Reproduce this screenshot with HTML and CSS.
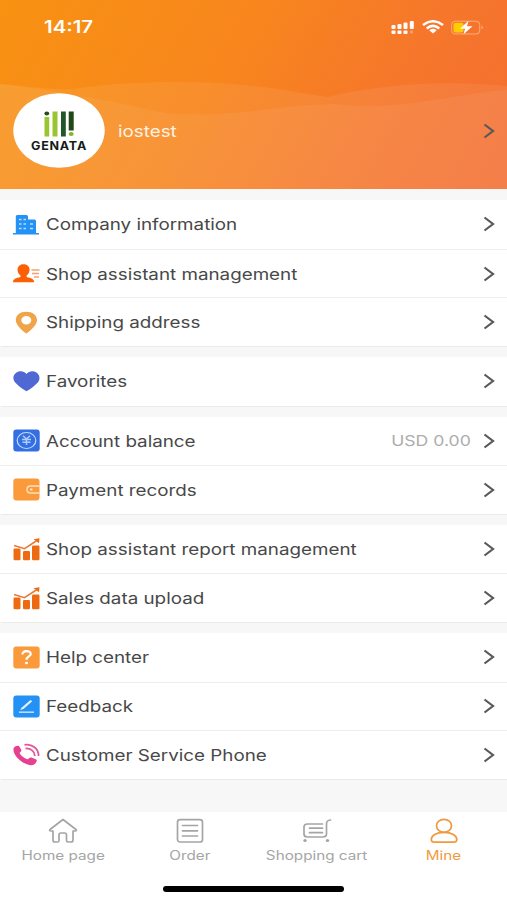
FILE: index.html
```html
<!DOCTYPE html>
<html lang="en">
<head>
<meta charset="utf-8">
<title>Mine</title>
<link rel="stylesheet" href="styles.css">
</head>
<body>
<svg class="defs" width="0" height="0">
  <symbol id="chevron" viewBox="0 0 12 16"><path d="M1.500 1.500 10 8l-8.500 6.500" fill="none" stroke="currentColor" stroke-width="2.200"/></symbol>
  <symbol id="chart" viewBox="0 0 27 23"><g fill="#ee6a12"><rect x="0.500" y="10.500" width="7" height="11.800" rx="1.200"/><rect x="10" y="13" width="7" height="9.300" rx="1.200"/><rect x="19" y="7.500" width="7.500" height="14.800" rx="1.200"/><path d="M20.500 1.300 26.500 .3l-.5 5z"/></g><path d="M1 7.500 11.500 10.700 24 2.500" fill="none" stroke="#e87936" stroke-width="1.500"/></symbol>
</svg>
<div class="screen">
  <header class="hero">
    <svg class="waves" viewBox="0 0 507 189" preserveAspectRatio="none">
      <path d="M0 84C28 86 50 90 72 89C120 82 170 81 220 83C270 86 300 93 328 97C370 86 440 79 507 86V189H0Z" fill="#fff" fill-opacity=".07"/>
      <path d="M0 84C50 89 110 101 165 113C235 119 280 104 335 104C400 112 450 94 507 90V189H0Z" fill="#fff" fill-opacity=".06"/>
    </svg>
    <div class="status">
      <span class="time"><span class="wide">14:17</span></span>
      <span class="indicators">
        <svg width="24" height="15" viewBox="0 0 24 15" fill="#fff"><rect x="0.500" y="5" width="4" height="4" rx="1"/><rect x="6.500" y="4" width="4" height="5" rx="1"/><rect x="12.500" y="2.500" width="4" height="6.500" rx="1"/><rect x="18.800" y="1" width="4" height="8" rx="1"/><rect x="0.500" y="10.500" width="4" height="3.500" rx="1"/><rect x="6.500" y="10.500" width="4" height="3.500" rx="1"/><rect x="12.500" y="10.500" width="4" height="3.500" rx="1"/><rect x="19" y="10.500" width="3" height="3" rx="1" opacity=".3"/></svg>
        <svg width="22" height="14" viewBox="0 0 22 14"><g fill="none" stroke="#fff" stroke-width="2.500"><path d="M1 5Q11-2.500 21 5"/><path d="M4.700 8.500Q11 3.200 17.300 8.500"/></g><path d="M7.300 10.200Q11 7.300 14.700 10.200L11 13.500Z" fill="#fff"/></svg>
        <svg width="33" height="15" viewBox="0 0 33 15"><rect x="0.700" y="1.200" width="28" height="12.800" rx="3.500" fill="none" stroke="#ffc49a" stroke-opacity=".7"/><path d="M30.500 5.500q3 2 0 4z" fill="#ffc49a" opacity=".7"/><rect x="2.500" y="2.800" width="10" height="9.600" rx="2" fill="#fc0"/><path d="M17.500 .8 9 8.700h5L12.500 14.200 21.500 6.300h-5.500z" fill="#fff"/></svg>
      </span>
    </div>
    <div class="profile">
      <svg class="avatar" viewBox="0 0 92 76"><ellipse cx="46" cy="37.500" rx="45.700" ry="37.300" fill="#fff"/><ellipse cx="33.800" cy="20.500" rx="2.400" ry="2" fill="#244d1c"/><rect x="31.500" y="24" width="4.700" height="19.500" fill="#9bc431"/><rect x="39.500" y="18.500" width="5" height="25" fill="#9bc431"/><rect x="48" y="18.500" width="4.800" height="25" fill="#205629"/><rect x="55.700" y="18.500" width="5" height="19" fill="#234817"/><ellipse cx="58.200" cy="41" rx="2.500" ry="2" fill="#83b52b"/><text x="18" y="56.500" class="brand" textLength="56" lengthAdjust="spacingAndGlyphs">GENATA</text></svg>
      <span class="name"><span class="wide">iostest</span></span>
      <svg class="chevron"><use href="#chevron"/></svg>
    </div>
  </header>

  <main class="menu">
    <section class="group">
      <div class="row"><svg class="icon" viewBox="0 0 27 23"><path d="M2.800 20V3.500q0-1.500 1.500-1.500h9.200q1.500 0 1.500 1.500v3h6.500q1.500 0 1.500 1.500v12h3v1.500H0V20z" fill="#2492f4"/><path d="M6 6.500h2.500m2 0H13M6 11h2.500m2 0H13M6 15.500h2.500m2 0H13M17 11h3m-3 4.500h3" stroke="#b7dcff" stroke-width="1.300"/></svg><span class="label"><span class="wide">Company information</span></span><svg class="chevron"><use href="#chevron"/></svg></div>
      <div class="row"><svg class="icon" viewBox="0 0 27 23"><path d="M10.500 2.200c-4 0-6 2.500-6 5.500 0 2.500 1.500 4.800 3 5.800v1.600C3 16.200 0 17 0 20.300h21.200c0-3.300-3-4.100-7.600-5.200v-1.600c1.500-1 3-3.300 3-5.800 0-3-2-5.500-6.100-5.500z" fill="#fb6104"/><path d="M18.500 8h8M19 11.500h7M21 15h5" stroke="#f6a16c" stroke-width="1.500"/></svg><span class="label"><span class="wide">Shop assistant management</span></span><svg class="chevron"><use href="#chevron"/></svg></div>
      <div class="row"><svg class="icon" viewBox="0 0 27 23"><path fill-rule="evenodd" d="M13.300.8C7 .8 2.800 4.300 2.800 9c0 5 5.700 10 10.500 13.600C18.300 19 24 14 24 9 24 4.300 19.600.8 13.300.8zm0 4.200a5 4.200 0 1 1 0 8.400 5 4.200 0 1 1 0-8.400z" fill="#f0a44a"/></svg><span class="label"><span class="wide">Shipping address</span></span><svg class="chevron"><use href="#chevron"/></svg></div>
    </section>
    <section class="group">
      <div class="row"><svg class="icon" viewBox="0 0 27 23"><path d="M13.500 4C11 .7 6.500.5 3.500 2.500-.5 5-.3 9.500 2 12.200 4.500 15 9 18.700 13.500 21.300 18 18.700 22.300 15 25 12.200 27.300 9.500 27 5 23.500 2.500 20.300.5 16 .7 13.500 4z" fill="#4f68d3"/></svg><span class="label"><span class="wide">Favorites</span></span><svg class="chevron"><use href="#chevron"/></svg></div>
    </section>
    <section class="group">
      <div class="row"><svg class="icon" viewBox="0 0 27 23"><rect x=".3" y=".5" width="26.400" height="22" rx="3" fill="#356ee0"/><ellipse cx="13.500" cy="11.500" rx="9.300" ry="8" fill="none" stroke="#c0dcff" stroke-width="1.200"/><path d="M10 6.800 13.500 10 17 6.800M9 10.500h9M9.500 13.200h8M13.500 10v6" fill="none" stroke="#a9ceff" stroke-width="1.500"/></svg><span class="label"><span class="wide">Account balance</span></span><span class="value"><span class="wide">USD 0.00</span></span><svg class="chevron"><use href="#chevron"/></svg></div>
      <div class="row"><svg class="icon" viewBox="0 0 27 23"><rect x=".3" y=".5" width="26.200" height="22" rx="3" fill="#fb9a3b"/><path d="M26.500 8H17.500q-3.500 0-3.500 3.500t3.500 3.500H26.500" fill="none" stroke="#ffe0bd" stroke-width="1.500"/><path d="M17 11.500h2.500" stroke="#ffe0bd" stroke-width="2"/></svg><span class="label"><span class="wide">Payment records</span></span><svg class="chevron"><use href="#chevron"/></svg></div>
    </section>
    <section class="group">
      <div class="row"><svg class="icon"><use href="#chart"/></svg><span class="label"><span class="wide">Shop assistant report management</span></span><svg class="chevron"><use href="#chevron"/></svg></div>
      <div class="row"><svg class="icon"><use href="#chart"/></svg><span class="label"><span class="wide">Sales data upload</span></span><svg class="chevron"><use href="#chevron"/></svg></div>
    </section>
    <section class="group">
      <div class="row"><svg class="icon" viewBox="0 0 27 23"><rect x=".3" y=".5" width="26.400" height="22" rx="3" fill="#fb9a3b"/><path d="M9.500 8.500c0-4.500 8.200-4.500 8.200-.6 0 2.500-4.200 2.600-4.200 5.800" fill="none" stroke="#fff" stroke-width="2.200"/><ellipse cx="13.500" cy="17" rx="1.500" ry="1.300" fill="#fff"/></svg><span class="label"><span class="wide">Help center</span></span><svg class="chevron"><use href="#chevron"/></svg></div>
      <div class="row"><svg class="icon" viewBox="0 0 27 23"><rect x=".3" y=".5" width="26.400" height="22" rx="3" fill="#2492f4"/><path d="M6 17.200H21" stroke="#c3e2ff" stroke-width="1.500"/><path d="M17.500 5 8.500 12.700l-1.200 2.300 3.200-.9L19.200 6.300z" fill="#e4f2ff"/></svg><span class="label"><span class="wide">Feedback</span></span><svg class="chevron"><use href="#chevron"/></svg></div>
      <div class="row"><svg class="icon" viewBox="0 0 27 23"><path d="M.5 5.500C1 3.500 4.500 2 6 3l2.300 3.700c.7 1.300-1.300 2.400-1.800 3.300 1.500 3 4.500 5.200 8 6.300 1.300-.3 2-2.300 3.800-1.700l5 2c1.500 1-.8 4.700-3.300 5.400C12.500 23.500-.5 13.500.5 5.500z" fill="#e5418f"/><path d="M11.500 1.800C19 .5 26 6 25.500 13M12.500 5.500C17.500 5 22 8.500 21.700 13" fill="none" stroke="#e5559a" stroke-width="1.800"/></svg><span class="label"><span class="wide">Customer Service Phone</span></span><svg class="chevron"><use href="#chevron"/></svg></div>
    </section>
  </main>

  <footer class="tabbar">
    <nav class="tabs">
      <div class="tab"><svg class="tabicon" viewBox="0 0 30 26"><path d="M15 1.500 2 11.500q-1.200 1.500 1 1.500h2V22q0 2 2 2h2.500q1.500 0 1.500-1.500V17q0-2 2-2h3.500q2 0 2 2v5.500q0 1.500 1.500 1.500H23q2 0 2-2v-9h2q2.200 0 1-1.500z"/></svg><span class="wide">Home page</span></div>
      <div class="tab"><svg class="tabicon" viewBox="0 0 30 26"><rect x="2.500" y="1.700" width="25" height="22.300" rx="2.500"/><path d="M7.500 7.500h15M7.500 12.800h15M7.500 18h15"/></svg><span class="wide">Order</span></div>
      <div class="tab"><svg class="tabicon" viewBox="0 0 30 26"><path d="M20.500 6H5.500Q2 6 2 9v7q0 3 3.500 3h15q4 0 4-3V5.500q0-3 4-3.500M7.500 10.200h13M7.500 14.700h13"/><ellipse class="dot" cx="3" cy="22.500" rx="1.700" ry="1.500"/><ellipse class="dot" cx="25.500" cy="22.500" rx="1.700" ry="1.500"/></svg><span class="wide">Shopping cart</span></div>
      <div class="tab active"><svg class="tabicon" viewBox="0 0 30 26"><ellipse cx="15" cy="7.800" rx="7.500" ry="6.500"/><path d="M15 14.300C7 14.300 2.300 17.500 2.300 21.500q0 2.700 3 2.700h19.500q3 0 3-2.700c0-4-4.800-7.200-12.800-7.200z"/></svg><span class="wide">Mine</span></div>
    </nav>
    <div class="home-indicator"></div>
  </footer>
</div>
</body>
</html>
```
FILE: styles.css
```css
* { box-sizing: border-box; }
body { margin: 0; font-family: Inter, "Liberation Sans", sans-serif; }
.defs { display: block; position: absolute; }
.screen { width: 507px; height: 900px; display: flex; flex-direction: column; background: #f7f7f7; overflow: hidden; }
svg { display: block; flex: none; }
.wide { display: inline-block; white-space: nowrap; transform: scaleX(1.175); transform-origin: left center; }

.hero { position: relative; height: 189px; background: linear-gradient(120deg, #f89212 0%, #f8861d 42%, #f6772b 72%, #f46d31 100%); color: #fff; }
.waves { position: absolute; inset: 0; width: 507px; height: 189px; }
.status { position: relative; height: 54px; display: flex; align-items: center; justify-content: space-between; padding: 0 23px 0 44px; }
.time { font-size: 17px; font-weight: 600; }
.time .wide { transform: scaleX(1.2); }
.indicators { display: flex; align-items: center; gap: 7px; }
.profile { position: relative; height: 76px; margin-top: 39px; display: flex; align-items: center; padding: 0 12px 0 13px; }
.avatar { width: 92px; height: 76px; }
.brand { font-size: 11.500px; font-weight: 700; letter-spacing: 0.700px; fill: #161c19; }
.name { flex: 1; margin-left: 13px; font-size: 16px; }
.name .wide { color: #fff2e4; }

.menu { flex: 1; display: flex; flex-direction: column; gap: 11px; padding-top: 11.200px; }
.group { background: #fff; box-shadow: 0 0 1px 0.500px #eaeaea; }
.row { height: 48.600px; display: flex; align-items: center; padding: 0 12px 0 13px; }
.row + .row { border-top: 1px solid #ededed; }
.icon { width: 27px; height: 23px; }
.label { flex: 1; margin-left: 6px; font-size: 16px; color: #484848; }
.value { margin-right: 12px; font-size: 15px; color: #adadad; }
.value .wide { transform-origin: right center; }
.chevron { width: 12px; height: 16px; color: #595959; }

.tabbar { height: 88px; background: #fff; display: flex; flex-direction: column; align-items: center; }
.tabs { width: 507px; height: 74px; display: grid; grid-template-columns: repeat(4, 1fr); }
.tab { display: flex; flex-direction: column; align-items: center; gap: 4px; padding-top: 6px; font-size: 12.500px; line-height: 16px; color: #a5a5a5; }
.tab .wide { transform: scaleX(1.22); transform-origin: center; }
.tabicon { width: 30px; height: 26px; fill: none; stroke: currentColor; stroke-width: 1.700; stroke-linecap: round; stroke-linejoin: round; }
.tabicon .dot { fill: currentColor; stroke: none; }
.active { color: #f09a40; }
.home-indicator { width: 181px; height: 6px; border-radius: 3px; background: #000; }
```
